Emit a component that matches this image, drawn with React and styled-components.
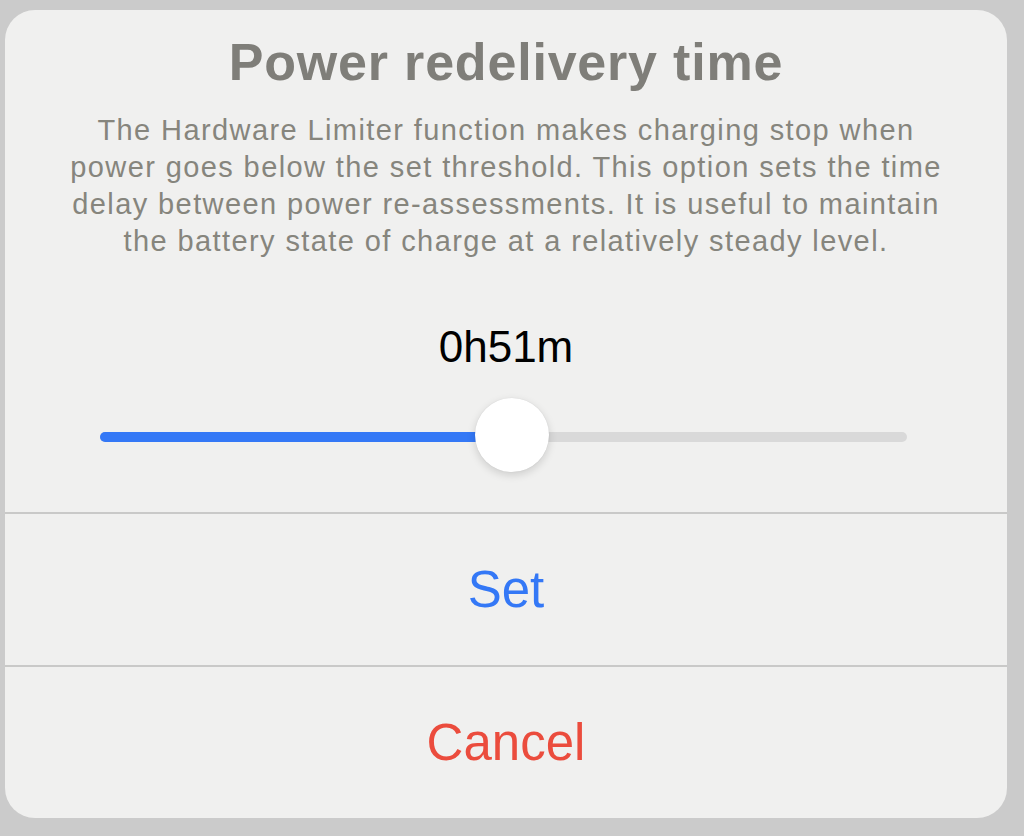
import React, { useState } from 'react';
import styled, { createGlobalStyle } from 'styled-components';

const GlobalStyle = createGlobalStyle`
  html, body {
    margin: 0;
    padding: 0;
    background: #cbcbcb;
    font-family: "Liberation Sans", Arial, sans-serif;
  }
`;

const Page = styled.div`
  width: 1024px;
  height: 836px;
  padding: 10px 0 0 5px;
  box-sizing: border-box;
`;

const Dialog = styled.div`
  width: 1002px;
  height: 808px;
  background: #f0f0ef;
  border-radius: 30px;
  display: flex;
  flex-direction: column;
  overflow: hidden;
`;

const Header = styled.div`
  display: flex;
  flex-direction: column;
  align-items: center;
  padding: 22px 0 0;
  height: 502px;
  box-sizing: border-box;
`;

const Title = styled.h1`
  margin: 0;
  font-size: 52px;
  line-height: 60px;
  font-weight: 700;
  letter-spacing: 0.8px;
  color: #7f7e79;
  text-align: center;
`;

const Message = styled.p`
  margin: 20px 0 0;
  font-size: 29px;
  line-height: 37px;
  letter-spacing: 1.4px;
  color: #86857d;
  text-align: center;
  white-space: nowrap;
`;

const Value = styled.div`
  margin-top: 62px;
  font-size: 44px;
  line-height: 50px;
  color: #000;
`;

const SliderWrap = styled.div`
  align-self: stretch;
  margin: 26px 100px 0 95px;
  height: 74px;
  position: relative;
  display: flex;
  align-items: center;
`;

const Track = styled.div`
  flex: 1;
  height: 10px;
  border-radius: 5px;
  background: #d9d9d9;
  position: relative;
  margin-top: 4px;
`;

const Fill = styled.div`
  height: 100%;
  border-radius: 5px;
  background: #3478f6;
`;

const Thumb = styled.div`
  position: absolute;
  top: 0;
  width: 74px;
  height: 74px;
  margin-left: -37px;
  border-radius: 50%;
  background: #fff;
  box-shadow: 0 3px 8px rgba(0, 0, 0, 0.15), 0 0 1px rgba(0, 0, 0, 0.12);
`;

const Divider = styled.div`
  height: 1.5px;
  background: #c9c9c8;
`;

const ActionButton = styled.button`
  flex: 1;
  border: none;
  background: transparent;
  font-family: inherit;
  font-size: 51px;
  color: ${(p) => (p.$danger ? '#eb4c3d' : '#3478f6')};
  cursor: pointer;
  padding: 0;
`;

const MAX = 100;

export default function App() {
  const [minutes] = useState(51);
  const pct = (minutes / MAX) * 100;
  const h = Math.floor(minutes / 60);
  const m = minutes % 60;

  return (
    <>
      <GlobalStyle />
      <Page>
        <Dialog>
          <Header>
            <Title>Power redelivery time</Title>
            <Message>
              The Hardware Limiter function makes charging stop when
              <br />
              power goes below the set threshold. This option sets the time
              <br />
              delay between power re-assessments. It is useful to maintain
              <br />
              the battery state of charge at a relatively steady level.
            </Message>
            <Value>{`${h}h${m}m`}</Value>
            <SliderWrap>
              <Track>
                <Fill style={{ width: `${pct}%` }} />
              </Track>
              <Thumb style={{ left: `${pct}%` }} />
            </SliderWrap>
          </Header>
          <Divider />
          <ActionButton>Set</ActionButton>
          <Divider />
          <ActionButton $danger>Cancel</ActionButton>
        </Dialog>
      </Page>
    </>
  );
}
